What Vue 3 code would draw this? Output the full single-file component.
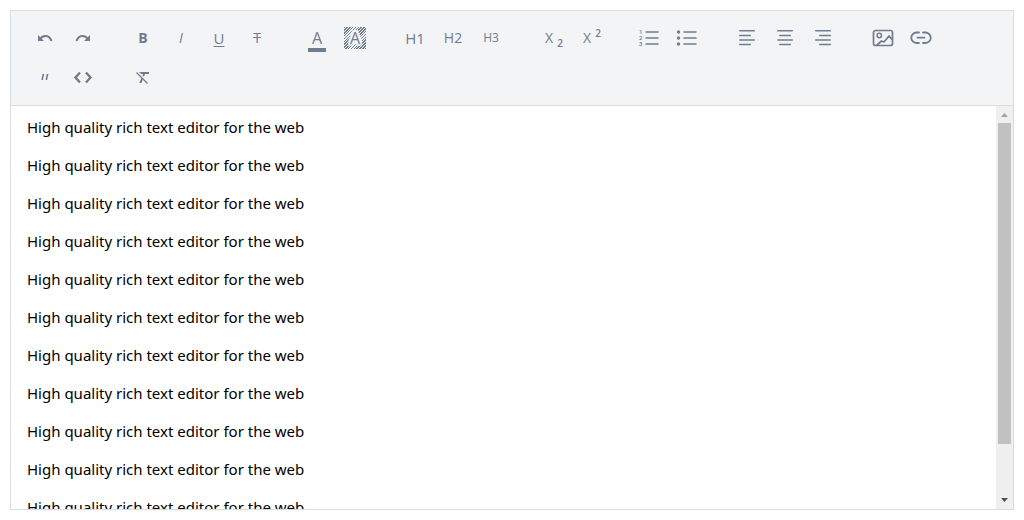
<script setup>
const line = (d, w = 1.5) =>
  `<path d="${d}" fill="none" stroke="currentColor" stroke-width="${w}" stroke-linecap="round" stroke-linejoin="round"/>`

const groups = [
  [
    { label: 'Undo', svg: '<path d="M5 9v6h6z" fill="currentColor"/><path d="M7 13C10 9 16 8.500 18.500 15" fill="none" stroke="currentColor" stroke-width="2"/>' },
    { label: 'Redo', svg: '<path d="M19 9v6h-6z" fill="currentColor"/><path d="M17 13C14 9 8 8.500 5.500 15" fill="none" stroke="currentColor" stroke-width="2"/>' }
  ],
  [
    { label: 'Bold', text: 'B', kind: 'bold' },
    { label: 'Italic', text: 'I', kind: 'italic' },
    { label: 'Underline', text: 'U', kind: 'underline' },
    { label: 'Strikethrough', text: 'T', kind: 'strike' }
  ],
  [
    { label: 'Text color', text: 'A', kind: 'color' },
    { label: 'Background color', text: 'A', kind: 'highlight' }
  ],
  [
    { label: 'Heading 1', text: 'H1', kind: 'h1' },
    { label: 'Heading 2', text: 'H2', kind: 'h2' },
    { label: 'Heading 3', text: 'H3', kind: 'h3' }
  ],
  [
    { label: 'Subscript', text: 'X', sub: '2', kind: 'script' },
    { label: 'Superscript', text: 'X', sup: '2', kind: 'script' }
  ],
  [
    { label: 'Ordered list', svg: line('M9 6h12M9 12h12M9 18h12') + '<g fill="currentColor" font-size="6" font-weight="500" font-family="Roboto, sans-serif"><text x="2" y="8">1</text><text x="2" y="14">2</text><text x="2" y="20">3</text></g>' },
    { label: 'Bullet list', svg: line('M9 6h12M9 12h12M9 18h12') + '<g fill="currentColor"><circle cx="3.500" cy="6" r="1.700"/><circle cx="3.500" cy="12" r="1.700"/><circle cx="3.500" cy="18" r="1.700"/></g>' }
  ],
  [
    { label: 'Align left', svg: line('M4.700 4.700h14.600M4.700 9.500h10.600M4.700 14h14.600M4.700 18.500h10.600', 1.4) },
    { label: 'Align center', svg: line('M4.700 4.700h14.600M6.700 9.500h10.600M4.700 14h14.600M6.700 18.500h10.600', 1.4) },
    { label: 'Align right', svg: line('M4.700 4.700h14.600M8.700 9.500h10.600M4.700 14h14.600M8.700 18.500h10.600', 1.4) }
  ],
  [
    { label: 'Image', svg: line('M4.500 4.500h15a2 2 0 0 1 2 2v11a2 2 0 0 1-2 2h-15a2 2 0 0 1-2-2v-11a2 2 0 0 1 2-2zM6 19l4.500-4 2.500 1 5-6 3 3.500', 1.7) + '<circle cx="8.300" cy="9.500" r="2.200" fill="none" stroke="currentColor" stroke-width="1.500"/>' },
    { label: 'Link', svg: line('M10 6.500H7.500a5 5 0 0 0 0 10.500H10M14 6.500h2.500a5 5 0 0 1 0 10.500H14M8.500 11.700h7', 1.8) }
  ],
  [
    { label: 'Quote', svg: '<path d="M9.500 8h1.700l-1.300 6H8.400zM13.700 8h1.700l-1.300 6h-1.500z" fill="currentColor"/>' },
    { label: 'Code', svg: '<path d="M9 6.500L4.500 11.500 9 16.500M15 6.500l4.500 5L15 16.500" fill="none" stroke="currentColor" stroke-width="2.400"/>' }
  ],
  [
    { label: 'Clear formatting', svg: '<path d="M8 6h10v2h-4l-1.100 2.700-1.500-1.500.5-1.200h-1.800zM10.300 12l1.500 1.500L10.500 17H8.300z" fill="currentColor"/><path d="M5.500 6.500l11 11" stroke="currentColor" stroke-width="1.300"/>' }
  ]
]

const paragraphs = Array.from({ length: 11 }, () => 'High quality rich text editor for the web')
</script>

<template>
  <main class="editor">
    <div class="toolbar" role="toolbar" aria-label="Formatting">
      <div v-for="(group, g) in groups" :key="g" class="group">
        <button v-for="tool in group" :key="tool.label" type="button" class="tool" :aria-label="tool.label">
          <svg v-if="tool.svg" class="icon" viewBox="0 0 24 24" aria-hidden="true" v-html="tool.svg"></svg>
          <span v-else class="glyph" :class="tool.kind">{{ tool.text }}<sub v-if="tool.sub">{{ tool.sub }}</sub><sup v-if="tool.sup">{{ tool.sup }}</sup></span>
        </button>
      </div>
    </div>
    <div class="body">
      <div class="content" contenteditable="true" role="textbox" aria-multiline="true" aria-label="Document">
        <p v-for="(text, i) in paragraphs" :key="i">{{ text }}</p>
      </div>
      <div class="scrollbar">
        <button type="button" class="arrow" aria-label="Scroll up">
          <svg viewBox="0 0 17 17" aria-hidden="true"><path d="M5 11h7L8.500 7z" fill="#a3a3a3" /></svg>
        </button>
        <div class="track"><div class="thumb"></div></div>
        <button type="button" class="arrow" aria-label="Scroll down">
          <svg viewBox="0 0 17 17" aria-hidden="true"><path d="M5 6h7l-3.500 4z" fill="#505050" /></svg>
        </button>
      </div>
    </div>
  </main>
</template>

<style>
body {
  background: #fff;
}
</style>

<style scoped>
.editor {
  display: flex;
  flex-direction: column;
  box-sizing: border-box;
  height: calc(100vh - 20px);
  margin: 10px;
  border: 1px solid #dadde0;
  font-family: "Noto Sans", "Open Sans", sans-serif;
  color: #000;
}

.toolbar {
  display: flex;
  flex-wrap: wrap;
  column-gap: 22px;
  padding: 7px 15px;
  border-bottom: 1px solid #dadde0;
  background: #f3f4f6;
  color: #707d8f;
}

.group {
  display: flex;
}

.tool {
  display: flex;
  align-items: center;
  justify-content: center;
  width: 38px;
  height: 40px;
  padding: 0;
  border: 0;
  background: none;
  color: inherit;
  font-family: "Open Sans", "Noto Sans", sans-serif;
  cursor: pointer;
}

.icon {
  width: 24px;
  height: 24px;
}

.glyph {
  font-size: 14px;
  font-weight: 500;
  line-height: 20px;
}

.bold {
  font-weight: 700;
}

.italic {
  font-style: italic;
}

.underline {
  font-size: 15px;
  text-decoration: underline;
  text-underline-offset: 2px;
}

.strike {
  text-decoration: line-through;
}

.color {
  box-sizing: border-box;
  width: 18px;
  height: 28px;
  padding-top: 4px;
  border-bottom: 4px solid #707d8f;
  font-size: 16px;
}

.highlight {
  width: 22px;
  height: 22px;
  background: repeating-linear-gradient(135deg, #707d8f 0 1px, #f3f4f6 1px 2px);
  font-size: 16px;
  line-height: 22px;
  text-shadow: 1px 0 #f3f4f6, -1px 0 #f3f4f6, 0 2px #f3f4f6, 0 -2px #f3f4f6, 2px 0 #f3f4f6, -2px 0 #f3f4f6, 2px 2px #f3f4f6, -2px 2px #f3f4f6, 2px -2px #f3f4f6, -2px -2px #f3f4f6;
}

.h1 {
  font-size: 15px;
}

.h2 {
  font-size: 14px;
}

.h3 {
  font-size: 12px;
}

.script {
  display: flex;
  gap: 4px;
  padding-left: 6px;
}

.script sub,
.script sup {
  font-size: 10px;
  font-weight: 600;
  line-height: 10px;
}

.script sub {
  align-self: flex-end;
}

.body {
  display: flex;
  flex: 1;
  min-height: 0;
}

.content {
  flex: 1;
  padding: 10px 16px;
  overflow: hidden;
  outline: none;
  font-size: 15px;
  line-height: 22px;
}

.content p {
  margin: 0 0 16px;
}

.scrollbar {
  display: flex;
  flex-direction: column;
  width: 17px;
  background: #f0f0f0;
}

.arrow {
  width: 17px;
  height: 17px;
  padding: 0;
  border: 0;
  background: none;
}

.arrow svg {
  display: block;
}

.track {
  flex: 1;
  padding: 0 2px;
}

.thumb {
  height: 87%;
  background: #c1c1c1;
}
</style>
